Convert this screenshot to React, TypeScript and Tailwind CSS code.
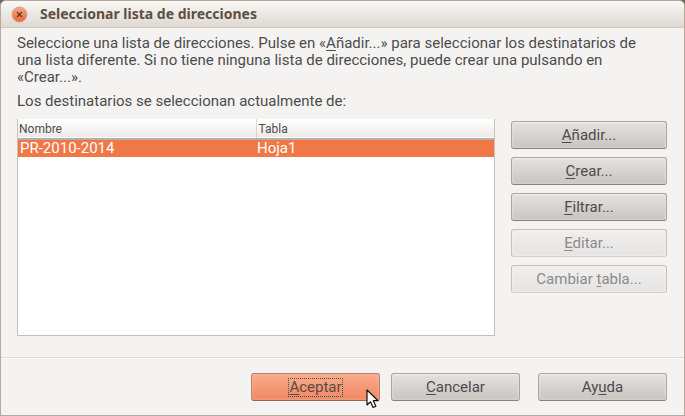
import React, { useState } from 'react';

interface Source {
  name: string;
  table: string;
}

interface DialogButtonProps {
  label: string;
  // letter that gets the underline, as an index into the label
  mnemonic: number;
  variant?: 'normal' | 'default';
  disabled?: boolean;
}

const sources: Source[] = [{ name: 'PR-2010-2014', table: 'Hoja1' }];

const Mnemonic: React.FC<{ label: string; index: number }> = ({ label, index }) => (
  <>
    {label.slice(0, index)}
    <span className="underline decoration-1 underline-offset-2">{label[index]}</span>
    {label.slice(index + 1)}
  </>
);

const DialogButton: React.FC<DialogButtonProps> = ({ label, mnemonic, variant = 'normal', disabled }) => {
  let look =
    'border-[#a9a5a1] border-b-[#85817d] bg-linear-to-b from-[#e4e2e0] to-[#c9c4c0] text-[#4c4c4c] shadow-[inset_0_1px_1px_#f1f0ef,inset_0_0_3px_#e6e4e2]';
  if (disabled) {
    look =
      'border-[#c4c2c0] border-b-[#d2d0ce] bg-linear-to-b from-[#f0efee] to-[#e6e4e3] text-[#8c8b8a] shadow-[inset_0_0_3px_#f5f4f3]';
  } else if (variant === 'default') {
    look =
      'border-[#b78370] border-b-[#8e6857] bg-linear-to-b from-[#faac8c] to-[#ef8760] text-[#5c4a43] shadow-[inset_0_0_3px_#fbb89d]';
  }

  return (
    <button
      type="button"
      disabled={disabled}
      className={`flex h-7 w-full items-center justify-center rounded-[3px] border ${look}`}
    >
      <span className={variant === 'default' ? 'outline-1 outline-dotted outline-[#28566b]' : ''}>
        <Mnemonic label={label} index={mnemonic} />
      </span>
    </button>
  );
};

const Pointer = () => (
  <svg className="pointer-events-none absolute top-4 left-[115px] h-5 w-[14px]" viewBox="0 0 14 20" aria-hidden="true">
    <path d="M1 1v15l3.5-3.2 2.6 5.7 2.8-1.2-2.6-5.6h4.8z" fill="#fff" stroke="#111" strokeWidth="1.2" strokeLinejoin="round" />
  </svg>
);

export default function App() {
  const [selected, setSelected] = useState(0);

  return (
    <div className="bg-[#6e6a68]">
      <div className="flex min-h-screen flex-col overflow-hidden rounded-t-md border border-[#b7aa9d] bg-[#f4f3f2] font-[Roboto,sans-serif] text-[15px] leading-[17px] text-[#4c4c4c]">
        <header className="flex h-[27px] shrink-0 items-center gap-3 border-b border-[#d3c9c0] bg-linear-to-b from-[#faf9f7] to-[#dfd8d1] pl-2.5">
          <button type="button" aria-label="Cerrar" className="rounded-full">
            <svg className="size-[17px]" viewBox="0 0 17 17">
              <defs>
                <linearGradient id="close-fill" x1="0" y1="0" x2="0" y2="1">
                  <stop offset="0" stopColor="#f8a98a" />
                  <stop offset="1" stopColor="#ef6332" />
                </linearGradient>
              </defs>
              <circle cx="8.5" cy="8.5" r="7.5" fill="url(#close-fill)" stroke="#c8a594" />
              <path d="M6 6l5 5M11 6l-5 5" stroke="#6b3422" strokeWidth="1.3" />
            </svg>
          </button>
          <h1 className="pb-0.5 font-['Noto_Sans',sans-serif] text-sm leading-[17px] font-bold text-[#5b5045]">
            Seleccionar lista de direcciones
          </h1>
        </header>

        <main className="flex flex-1 flex-col px-4 pt-[7px] pb-[21px]">
          <p className="pr-6">
            Seleccione una lista de direcciones. Pulse en «<Mnemonic label="Añadir..." index={0} />» para seleccionar los
            destinatarios de una lista diferente. Si no tiene ninguna lista de direcciones, puede crear una pulsando en
            «Crear...».
          </p>
          <p className="mt-[7px]">Los destinatarios se seleccionan actualmente de:</p>

          <div className="mt-[9px] flex flex-1 gap-4 pr-px">
            <div className="flex-1 border border-t-0 border-[#c9c1b8] bg-white">
              <table className="w-full table-fixed border-collapse">
                <thead>
                  <tr className="h-5 border-b-2 border-[#b5afa9] bg-linear-to-b from-white to-[#edebe9] text-left text-xs">
                    <th className="border-r border-[#dbd5cf] px-px font-normal">Nombre</th>
                    <th className="px-0.5 font-normal">Tabla</th>
                  </tr>
                </thead>
                <tbody>
                  {sources.map((source, idx) => (
                    <tr
                      key={source.name}
                      onClick={() => setSelected(idx)}
                      className={idx === selected ? 'bg-[#f07746] text-white' : ''}
                    >
                      <td className="px-0.5">{source.name}</td>
                      <td className="px-px">{source.table}</td>
                    </tr>
                  ))}
                </tbody>
              </table>
            </div>

            <div className="flex w-[156px] flex-col gap-2 pt-0.5">
              <DialogButton label="Añadir..." mnemonic={0} />
              <DialogButton label="Crear..." mnemonic={0} />
              <DialogButton label="Filtrar..." mnemonic={0} />
              <DialogButton label="Editar..." mnemonic={0} disabled />
              <DialogButton label="Cambiar tabla..." mnemonic={8} disabled />
            </div>
          </div>
        </main>

        <footer className="flex justify-end gap-[18px] border-t border-[#dddad8] px-[17px] pt-[15px] pb-3.5 shadow-[inset_0_1px_0_#fbfafa]">
          <div className="flex gap-[11px]">
            <div className="relative w-[129px]">
              <DialogButton label="Aceptar" mnemonic={0} variant="default" />
              <Pointer />
            </div>
            <div className="w-[129px]">
              <DialogButton label="Cancelar" mnemonic={0} />
            </div>
          </div>
          <div className="w-[129px]">
            <DialogButton label="Ayuda" mnemonic={2} />
          </div>
        </footer>
      </div>
    </div>
  );
}
